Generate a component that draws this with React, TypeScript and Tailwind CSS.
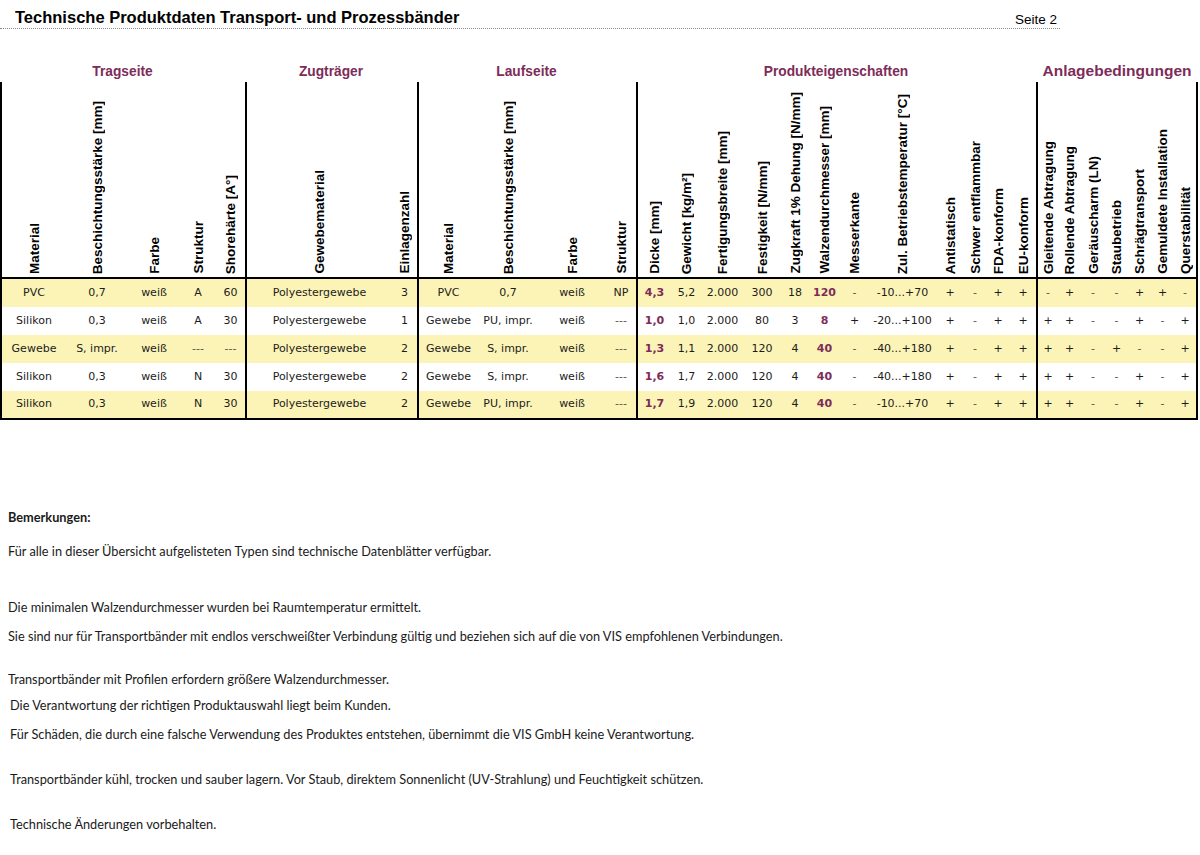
import React from "react";

const PURPLE = "text-[#7d2c5a]";

type Col = { h: string; w: number; start?: boolean; end?: boolean; accent?: boolean };

const cols: Col[] = [
  { h: "Material", w: 66, start: true },
  { h: "Beschichtungsstärke [mm]", w: 62 },
  { h: "Farbe", w: 52 },
  { h: "Struktur", w: 36 },
  { h: "Shorehärte [A°]", w: 29 },
  { h: "Gewebematerial", w: 147, start: true },
  { h: "Einlagenzahl", w: 25 },
  { h: "Material", w: 61, start: true },
  { h: "Beschichtungsstärke [mm]", w: 60 },
  { h: "Farbe", w: 68 },
  { h: "Struktur", w: 30 },
  { h: "Dicke [mm]", w: 35, start: true, accent: true },
  { h: "Gewicht [kg/m²]", w: 31 },
  { h: "Fertigungsbreite [mm]", w: 41 },
  { h: "Festigkeit [N/mm]", w: 38 },
  { h: "Zugkraft 1% Dehung [N/mm]", w: 28 },
  { h: "Walzendurchmesser [mm]", w: 31, accent: true },
  { h: "Messerkante", w: 29 },
  { h: "Zul. Betriebstemperatur [°C]", w: 67 },
  { h: "Antistatisch", w: 28 },
  { h: "Schwer entflammbar", w: 22 },
  { h: "FDA-konform", w: 24 },
  { h: "EU-konform", w: 26 },
  { h: "Gleitende Abtragung", w: 22, start: true },
  { h: "Rollende Abtragung", w: 23 },
  { h: "Geräuscharm (LN)", w: 24 },
  { h: "Staubetrieb", w: 23 },
  { h: "Schrägtransport", w: 23 },
  { h: "Gemuldete Installation", w: 23 },
  { h: "Querstabilität", w: 24, end: true },
];

const groups = [
  { label: "Tragseite", w: 245 },
  { label: "Zugträger", w: 172 },
  { label: "Laufseite", w: 219 },
  { label: "Produkteigenschaften", w: 400 },
  { label: "Anlagebedingungen", w: 162, big: true },
];

const rows: string[][] = [
  ["PVC", "0,7", "weiß", "A", "60", "Polyestergewebe", "3", "PVC", "0,7", "weiß", "NP", "4,3", "5,2", "2.000", "300", "18", "120", "-", "-10...+70", "+", "-", "+", "+", "-", "+", "-", "-", "+", "+", "-"],
  ["Silikon", "0,3", "weiß", "A", "30", "Polyestergewebe", "1", "Gewebe", "PU, impr.", "weiß", "---", "1,0", "1,0", "2.000", "80", "3", "8", "+", "-20...+100", "+", "-", "+", "+", "+", "+", "-", "-", "+", "-", "+"],
  ["Gewebe", "S, impr.", "weiß", "---", "---", "Polyestergewebe", "2", "Gewebe", "S, impr.", "weiß", "---", "1,3", "1,1", "2.000", "120", "4", "40", "-", "-40...+180", "+", "-", "+", "+", "+", "+", "-", "+", "-", "-", "+"],
  ["Silikon", "0,3", "weiß", "N", "30", "Polyestergewebe", "2", "Gewebe", "S, impr.", "weiß", "---", "1,6", "1,7", "2.000", "120", "4", "40", "-", "-40...+180", "+", "-", "+", "+", "+", "+", "-", "-", "+", "-", "+"],
  ["Silikon", "0,3", "weiß", "N", "30", "Polyestergewebe", "2", "Gewebe", "PU, impr.", "weiß", "---", "1,7", "1,9", "2.000", "120", "4", "40", "-", "-10...+70", "+", "-", "+", "+", "+", "+", "-", "-", "+", "-", "+"],
];

const remarks = [
  { t: "Für alle in dieser Übersicht aufgelisteten Typen sind technische Datenblätter verfügbar.", mt: "mt-[20px]", x: "pl-[8px]" },
  { t: "Die minimalen Walzendurchmesser wurden bei Raumtemperatur ermittelt.", mt: "mt-[42px]", x: "pl-[8px]" },
  { t: "Sie sind nur für Transportbänder mit endlos verschweißter Verbindung gültig und beziehen sich auf die von VIS empfohlenen Verbindungen.", mt: "mt-[15px]", x: "pl-[8px]" },
  { t: "Transportbänder mit Profilen erfordern größere Walzendurchmesser.", mt: "mt-[29px]", x: "pl-[8px]" },
  { t: "Die Verantwortung der richtigen Produktauswahl liegt beim Kunden.", mt: "mt-[12px]", x: "pl-[10px]" },
  { t: "Für Schäden, die durch eine falsche Verwendung des Produktes entstehen, übernimmt die VIS GmbH keine Verantwortung.", mt: "mt-[15px]", x: "pl-[10px]" },
  { t: "Transportbänder kühl, trocken und sauber lagern. Vor Staub, direktem Sonnenlicht (UV-Strahlung) und Feuchtigkeit schützen.", mt: "mt-[31px]", x: "pl-[10px]" },
  { t: "Technische Änderungen vorbehalten.", mt: "mt-[31px]", x: "pl-[10px]" },
];

function cellBorder(c: Col) {
  return `${c.start ? "border-l-2 border-black" : ""} ${c.end ? "border-r-2 border-black" : ""}`;
}

export default function App() {
  return (
    <div className="w-[1200px] h-[855px] bg-white overflow-hidden font-['Liberation_Sans',Arial,sans-serif] text-black">
      {/* page head */}
      <div className="w-[1060px] flex items-end justify-between border-b border-dotted border-[#8a8a8a] pl-[15px] pr-[3px] pt-[7px] pb-[1px]">
        <h1 className="text-[16.5px] font-bold leading-[20px]">Technische Produktdaten Transport- und Prozessbänder</h1>
        <span className="text-[13.5px] leading-[16px] -mb-[1px]">Seite 2</span>
      </div>

      {/* group labels */}
      <div className="flex mt-[34px] h-[19px] items-center">
        {groups.map((g) => (
          <div
            key={g.label}
            style={{ width: g.w }}
            className={`text-center font-bold ${PURPLE} ${g.big ? "text-[15.5px] -mt-[3px]" : "text-[13.75px]"}`}
          >
            {g.label}
          </div>
        ))}
      </div>

      {/* table */}
      <div className="w-[1198px]">
        <div className="flex h-[197px] border-b-2 border-black">
          {cols.map((c, i) => (
            <div
              key={i}
              style={{ width: c.w }}
              className={`shrink-0 h-full flex items-end justify-center pb-[3px] ${cellBorder(c)}`}
            >
              <span className="[writing-mode:vertical-rl] rotate-180 whitespace-nowrap text-[13.5px] font-bold leading-[15px]">
                {c.h}
              </span>
            </div>
          ))}
        </div>
        <div className="border-b-2 border-black">
          {rows.map((r, ri) => (
            <div
              key={ri}
              className={`flex ${ri === 4 ? "h-[27px]" : "h-[28px]"} ${ri % 2 === 0 ? "bg-[#fcf4b6]" : "bg-white"}`}
            >
              {r.map((v, ci) => {
                const c = cols[ci];
                return (
                  <div
                    key={ci}
                    style={{ width: c.w }}
                    className={`shrink-0 flex items-center justify-center whitespace-nowrap font-['DejaVu_Sans',sans-serif] text-[11px] ${
                      c.accent ? `${PURPLE} font-bold` : v === "-" || v === "---" ? "text-[#555]" : "text-[#1c1c1c]"
                    } ${cellBorder(c)}`}
                  >
                    {v}
                  </div>
                );
              })}
            </div>
          ))}
        </div>
      </div>

      {/* remarks */}
      <div className="mt-[90px] font-['Lato',sans-serif] text-[12.75px] leading-[14px] text-[#1a1a1a]">
        <p className="pl-[8px] font-bold">Bemerkungen:</p>
        {remarks.map((r, i) => (
          <p key={i} className={`${r.mt} ${r.x}`}>
            {r.t}
          </p>
        ))}
      </div>
    </div>
  );
}
